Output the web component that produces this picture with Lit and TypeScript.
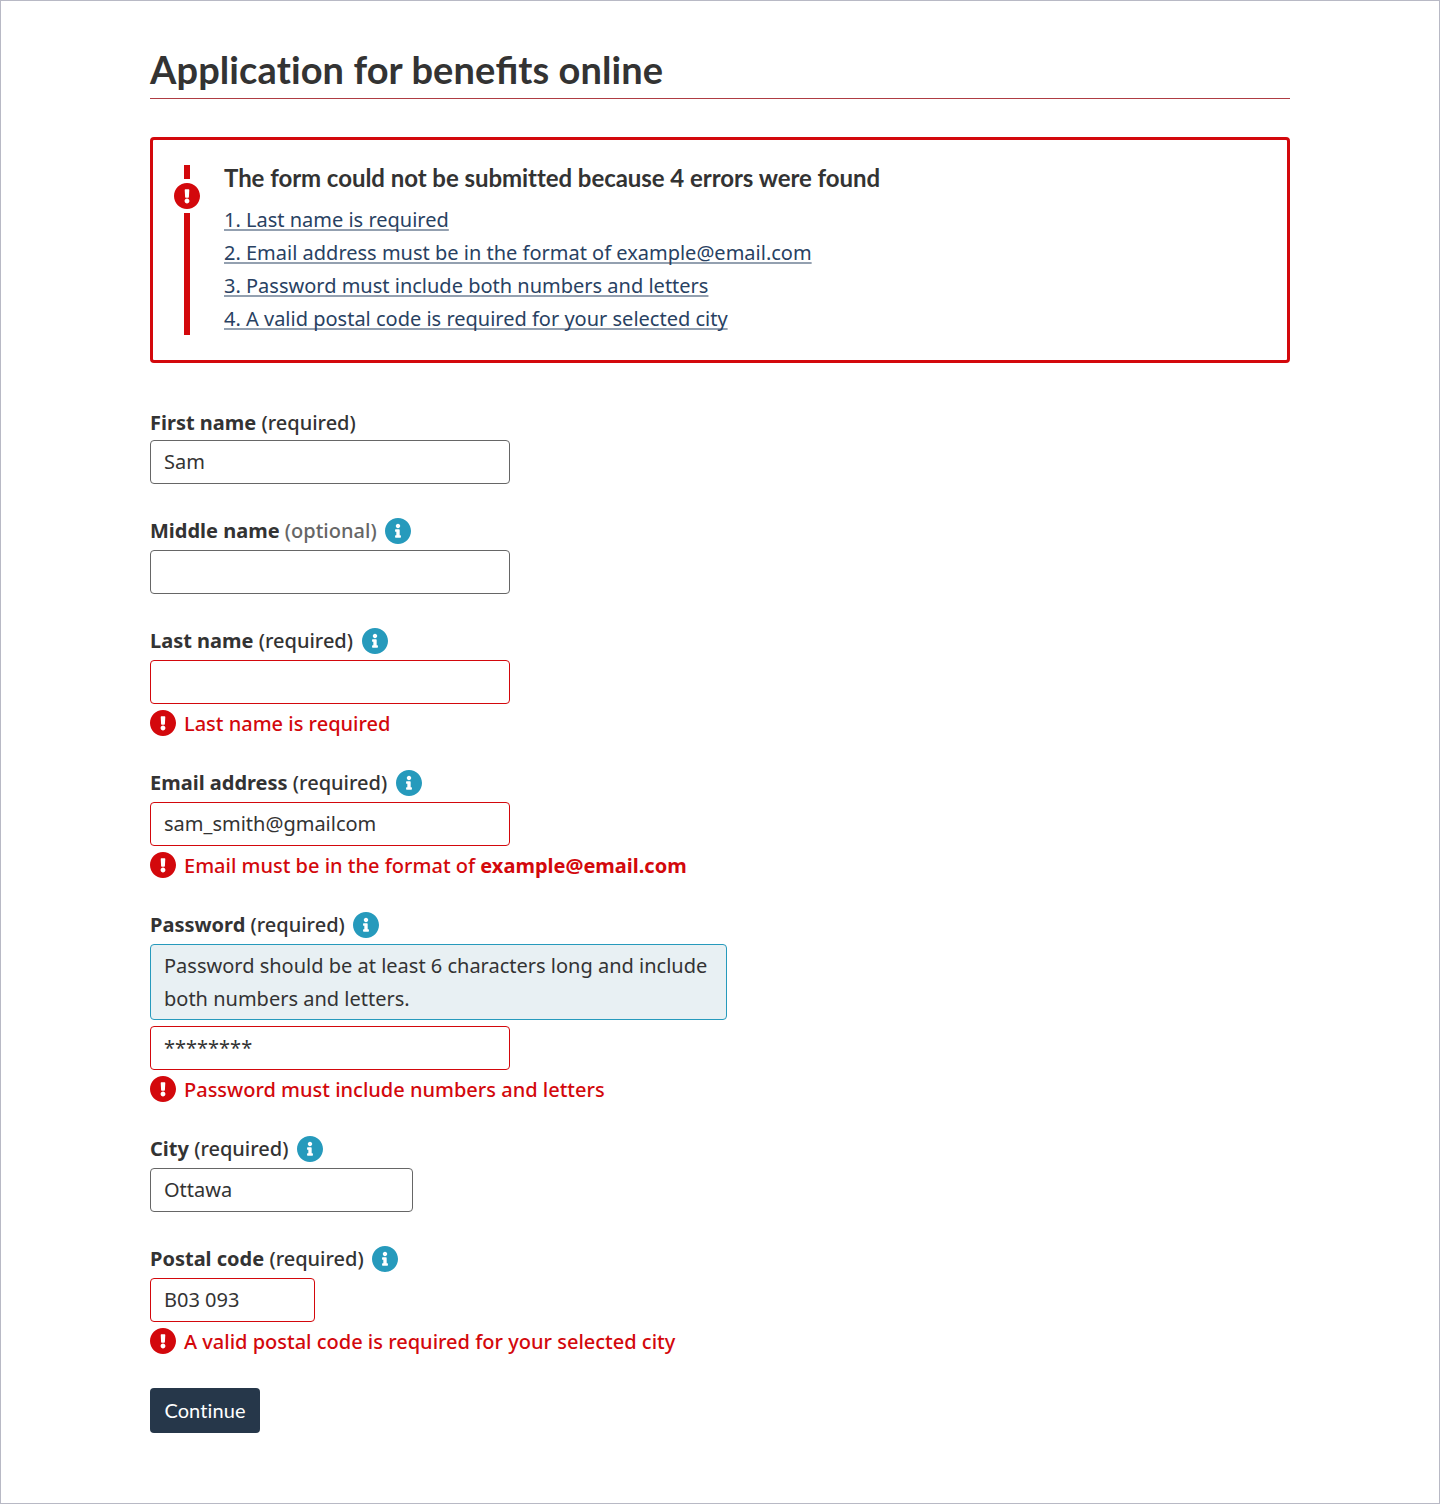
import { LitElement, html, css, svg, nothing } from "lit";
import { customElement, property } from "lit/decorators.js";
import { classMap } from "lit/directives/class-map.js";

const EXCLAMATION =
  "M504 256c0 136.997-111.043 248-248 248S8 392.997 8 256C8 119.083 119.043 8 256 8s248 111.083 248 248zm-248 50c-25.405 0-46 20.595-46 46s20.595 46 46 46 46-20.595 46-46-20.595-46-46-46zm-43.673-165.346l7.418 136c.347 6.364 5.609 11.346 11.982 11.346h48.546c6.373 0 11.635-4.982 11.982-11.346l7.418-136c.375-6.874-5.098-12.654-11.982-12.654h-63.383c-6.884 0-12.356 5.78-11.981 12.654z";
const INFO =
  "M256 8C119.043 8 8 119.083 8 256c0 136.997 111.043 248 248 248s248-111.003 248-248C504 119.083 392.957 8 256 8zm0 110c23.196 0 42 18.804 42 42s-18.804 42-42 42-42-18.804-42-42 18.804-42 42-42zm56 254c0 6.627-5.373 12-12 12h-88c-6.627 0-12-5.373-12-12v-24c0-6.627 5.373-12 12-12h12v-64h-12c-6.627 0-12-5.373-12-12v-24c0-6.627 5.373-12 12-12h64c6.627 0 12 5.373 12 12v100h12c6.627 0 12 5.373 12 12v24z";

@customElement("status-icon")
export class StatusIcon extends LitElement {
  @property() kind: "error" | "info" = "error";

  static styles = css`
    :host { display: block; width: 26px; height: 26px; flex: none; }
    .icon { display: block; width: 26px; height: 26px; }
    .error { fill: #d3080c; }
    .info { fill: #269abc; }
  `;

  render() {
    return html`<svg class="icon ${this.kind}" viewBox="8 8 496 496" aria-hidden="true">
      ${svg`<path d=${this.kind === "error" ? EXCLAMATION : INFO}></path>`}
    </svg>`;
  }
}

@customElement("form-field")
export class FormField extends LitElement {
  @property() label = "";
  @property() note = "required";
  @property() value = "";
  @property() size = "large";
  @property() hint = "";
  @property() error = "";
  @property() errorStrong = "";
  @property({ type: Boolean }) info = false;

  static styles = css`
    :host { display: block; font-family: "Noto Sans", sans-serif; font-size: 20px; color: #333; }
    .field { display: flex; flex-direction: column; align-items: flex-start; gap: 6px; }
    .field.plain { gap: 4px; }
    .head { display: flex; align-items: center; height: 26px; gap: 8.6px; }
    .label { line-height: 26px; white-space: pre; }
    .name { font-weight: 700; }
    .note { font-weight: 500; }
    .note.optional { color: #666; }
    .input {
      box-sizing: border-box; height: 44px; margin: 0; padding: 0 13px 2px;
      border: 1px solid #666; border-radius: 4px; background: #fff;
      font: inherit; color: inherit; outline: none;
    }
    .large { width: 360px; }
    .medium { width: 263px; }
    .small { width: 165px; }
    .invalid { border-color: #d3080c; }
    .hint {
      box-sizing: border-box; width: 577px; height: 76px; padding: 4px 13px;
      border: 1px solid #269abc; border-radius: 4px; background: #e8f0f3; line-height: 33px;
    }
    .message { display: flex; align-items: center; gap: 8px; height: 26px; color: #d3080c; font-weight: 500; line-height: 26px; }
    .text { padding-top: 2px; }
    .strong { font-weight: 700; }
  `;

  render() {
    const invalid = this.error !== "";
    return html`
      <div class=${classMap({ field: true, plain: !this.info })}>
        <div class="head">
          <label class="label" for="control"><span class="name">${this.label}</span> <span class="note ${this.note}">(${this.note})</span></label>
          ${this.info ? html`<status-icon kind="info"></status-icon>` : nothing}
        </div>
        ${this.hint ? html`<div class="hint">${this.hint}</div>` : nothing}
        <input id="control" class="input ${this.size} ${invalid ? "invalid" : ""}" type="text" .value=${this.value} />
        ${invalid
          ? html`<div class="message"><status-icon kind="error"></status-icon>
              <span class="text">${this.error}${this.errorStrong ? html` <span class="strong">${this.errorStrong}</span>` : nothing}</span></div>`
          : nothing}
      </div>
    `;
  }
}

const ERRORS = [
  "1. Last name is required",
  "2. Email address must be in the format of example@email.com",
  "3. Password must include both numbers and letters",
  "4. A valid postal code is required for your selected city",
];

@customElement("app-root")
export class AppRoot extends LitElement {
  static styles = css`
    :host { display: block; font-family: "Noto Sans", sans-serif; font-size: 20px; color: #333; }
    .page { box-sizing: border-box; height: 1504px; padding: 44px 149px 0; border: 1px solid #b8b9c5; background: #fff; }
    .title {
      box-sizing: border-box; height: 54px; margin: 0 0 38px; border-bottom: 1px solid #af3c43;
      font: 700 38px/48px Lato, sans-serif; font-variant-ligatures: none; letter-spacing: 0.1px;
    }
    .joined { font-variant-ligatures: common-ligatures; letter-spacing: 0; }
    .summary {
      box-sizing: border-box; display: flex; gap: 24px; height: 226px; margin-bottom: 47px;
      padding: 25px 21px; border: 3px solid #d3080c; border-radius: 4px;
    }
    .rail { display: flex; flex-direction: column; align-items: center; gap: 4px; width: 26px; height: 170px; }
    .stub { width: 6px; height: 14px; background: #d3080c; }
    .bar { width: 6px; flex: 1; background: #d3080c; }
    .heading {
      margin: 0 0 13px; font: 700 24px/25px Lato, sans-serif;
      font-variant-ligatures: none; letter-spacing: -0.05px;
    }
    .list { display: flex; flex-direction: column; align-items: flex-start; margin: 0; padding: 0; list-style: none; }
    .item { height: 33px; line-height: 33px; }
    .link {
      color: #284162; text-decoration: underline; text-decoration-color: #93a0b0;
      text-decoration-thickness: 2px; text-underline-offset: 2px; text-decoration-skip-ink: none;
    }
    .form { display: flex; flex-direction: column; align-items: flex-start; gap: 34px; }
    .button {
      width: 110px; height: 45px; padding: 0; border: 0; border-radius: 4px;
      background: #26374a; color: #fff; font: 400 20px/45px Lato, sans-serif;
      font-variant-ligatures: none; letter-spacing: 0.1px;
    }
  `;

  render() {
    return html`
      <main class="page">
        <h1 class="title">Application for bene<span class="joined">fi</span>ts online</h1>
        <section class="summary">
          <div class="rail">
            <div class="stub"></div>
            <status-icon kind="error"></status-icon>
            <div class="bar"></div>
          </div>
          <div>
            <h2 class="heading">The form could not be submitted because 4 errors were found</h2>
            <ul class="list">
              ${ERRORS.map((text) => html`<li class="item"><a class="link" href="#">${text}</a></li>`)}
            </ul>
          </div>
        </section>
        <div class="form">
          <form-field label="First name" value="Sam"></form-field>
          <form-field label="Middle name" note="optional" info></form-field>
          <form-field label="Last name" info error="Last name is required"></form-field>
          <form-field label="Email address" info value="sam_smith@gmailcom"
            error="Email must be in the format of" errorStrong="example@email.com"></form-field>
          <form-field label="Password" info value="********"
            hint="Password should be at least 6 characters long and include both numbers and letters."
            error="Password must include numbers and letters"></form-field>
          <form-field label="City" info size="medium" value="Ottawa"></form-field>
          <form-field label="Postal code" info size="small" value="B03 093"
            error="A valid postal code is required for your selected city"></form-field>
          <button class="button" type="button">Continue</button>
        </div>
      </main>
    `;
  }
}
